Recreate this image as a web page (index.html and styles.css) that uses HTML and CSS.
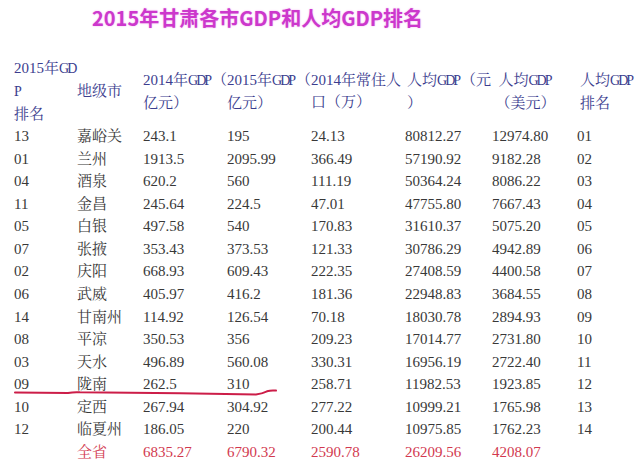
FILE: index.html
```html
<!DOCTYPE html>
<html lang="zh-CN">
<head>
<meta charset="utf-8">
<title>2015年甘肃各市GDP和人均GDP排名</title>
<link rel="stylesheet" href="styles.css">
</head>
<body>
<div class="page">
  <h1 class="title">2015年甘肃各市GDP和人均GDP排名</h1>
  <div class="table">
    <div class="row head">
      <div class="c c1">2015年<span class="g">GD</span><br><span class="g">P</span><br>排名</div>
      <div class="c c2">地级市</div>
      <div class="c c3">2014年<span class="g">GDP</span>（<br>亿元）</div>
      <div class="c c4">2015年<span class="g">GDP</span>（<br>亿元）</div>
      <div class="c c5">2014年常住人<br>口（万）</div>
      <div class="c c6">人均<span class="g">GDP</span>（元<br>）</div>
      <div class="c c7">人均<span class="g">GDP</span><br>（美元）</div>
      <div class="c c8">人均<span class="g">GDP</span><br>排名</div>
    </div>
    <div class="row"><div class="c">13</div><div class="c">嘉峪关</div><div class="c">243.1</div><div class="c">195</div><div class="c">24.13</div><div class="c">80812.27</div><div class="c">12974.80</div><div class="c">01</div></div>
    <div class="row"><div class="c">01</div><div class="c">兰州</div><div class="c">1913.5</div><div class="c">2095.99</div><div class="c">366.49</div><div class="c">57190.92</div><div class="c">9182.28</div><div class="c">02</div></div>
    <div class="row"><div class="c">04</div><div class="c">酒泉</div><div class="c">620.2</div><div class="c">560</div><div class="c">111.19</div><div class="c">50364.24</div><div class="c">8086.22</div><div class="c">03</div></div>
    <div class="row"><div class="c">11</div><div class="c">金昌</div><div class="c">245.64</div><div class="c">224.5</div><div class="c">47.01</div><div class="c">47755.80</div><div class="c">7667.43</div><div class="c">04</div></div>
    <div class="row"><div class="c">05</div><div class="c">白银</div><div class="c">497.58</div><div class="c">540</div><div class="c">170.83</div><div class="c">31610.37</div><div class="c">5075.20</div><div class="c">05</div></div>
    <div class="row"><div class="c">07</div><div class="c">张掖</div><div class="c">353.43</div><div class="c">373.53</div><div class="c">121.33</div><div class="c">30786.29</div><div class="c">4942.89</div><div class="c">06</div></div>
    <div class="row"><div class="c">02</div><div class="c">庆阳</div><div class="c">668.93</div><div class="c">609.43</div><div class="c">222.35</div><div class="c">27408.59</div><div class="c">4400.58</div><div class="c">07</div></div>
    <div class="row"><div class="c">06</div><div class="c">武威</div><div class="c">405.97</div><div class="c">416.2</div><div class="c">181.36</div><div class="c">22948.83</div><div class="c">3684.55</div><div class="c">08</div></div>
    <div class="row"><div class="c">14</div><div class="c">甘南州</div><div class="c">114.92</div><div class="c">126.54</div><div class="c">70.18</div><div class="c">18030.78</div><div class="c">2894.93</div><div class="c">09</div></div>
    <div class="row"><div class="c">08</div><div class="c">平凉</div><div class="c">350.53</div><div class="c">356</div><div class="c">209.23</div><div class="c">17014.77</div><div class="c">2731.80</div><div class="c">10</div></div>
    <div class="row"><div class="c">03</div><div class="c">天水</div><div class="c">496.89</div><div class="c">560.08</div><div class="c">330.31</div><div class="c">16956.19</div><div class="c">2722.40</div><div class="c">11</div></div>
    <div class="row"><div class="c">09</div><div class="c">陇南</div><div class="c">262.5</div><div class="c">310</div><div class="c">258.71</div><div class="c">11982.53</div><div class="c">1923.85</div><div class="c">12</div></div>
    <div class="row"><div class="c">10</div><div class="c">定西</div><div class="c">267.94</div><div class="c">304.92</div><div class="c">277.22</div><div class="c">10999.21</div><div class="c">1765.98</div><div class="c">13</div></div>
    <div class="row"><div class="c">12</div><div class="c">临夏州</div><div class="c">186.05</div><div class="c">220</div><div class="c">200.44</div><div class="c">10975.85</div><div class="c">1762.23</div><div class="c">14</div></div>
    <div class="row total"><div class="c"></div><div class="c">全省</div><div class="c">6835.27</div><div class="c">6790.32</div><div class="c">2590.78</div><div class="c">26209.56</div><div class="c">4208.07</div><div class="c"></div></div>
  </div>
  <svg class="mark" width="640" height="469" viewBox="0 0 640 469" aria-hidden="true">
    <path d="M15 392.5 L68 393 Q74 391.8 80 392.3 L180 393.2 L256 394.5 Q262 393.6 267 391.3 Q271 390 276 390.6" fill="none" stroke="#cc1d48" stroke-width="2" stroke-linecap="round"/>
  </svg>
</div>
</body>
</html>
```

FILE: styles.css
```css
html, body {
  margin: 0;
  padding: 0;
  background: #ffffff;
}

.page {
  position: relative;
  width: 640px;
  height: 469px;
  overflow: hidden;
}

.title {
  margin: 0;
  padding-left: 92px;
  height: 57px;
  line-height: 36px;
  font-family: "Noto Sans CJK SC", "Noto Sans", sans-serif;
  font-size: 20px;
  font-weight: 700;
  color: #cc38cc;
  text-shadow: 0 0 2px #f3b0f0;
  white-space: nowrap;
}

.table {
  padding-left: 14px;
  font-family: "Liberation Serif", "Noto Serif CJK SC", "Noto Sans CJK SC", serif;
  font-size: 15px;
  color: #383838;
}

.row {
  display: grid;
  grid-template-columns: 63px 66px 84px 84px 94px 87px 85px 1fr;
  height: 22.57px;
  line-height: 22.57px;
  white-space: nowrap;
}

.row.head {
  height: 68px;
  line-height: 22px;
  color: #3b3d8e;
  align-items: center;
}

.g {
  font-size: 14px;
  letter-spacing: -2px;
  margin-right: 2px;
}

.row.total {
  color: #d2394f;
}

.c6 {
  padding-left: 2px;
}

.c7 {
  text-align: center;
  padding-right: 18px;
}

.c8 {
  padding-left: 3px;
}

.mark {
  position: absolute;
  left: 0;
  top: 0;
  pointer-events: none;
}
```
